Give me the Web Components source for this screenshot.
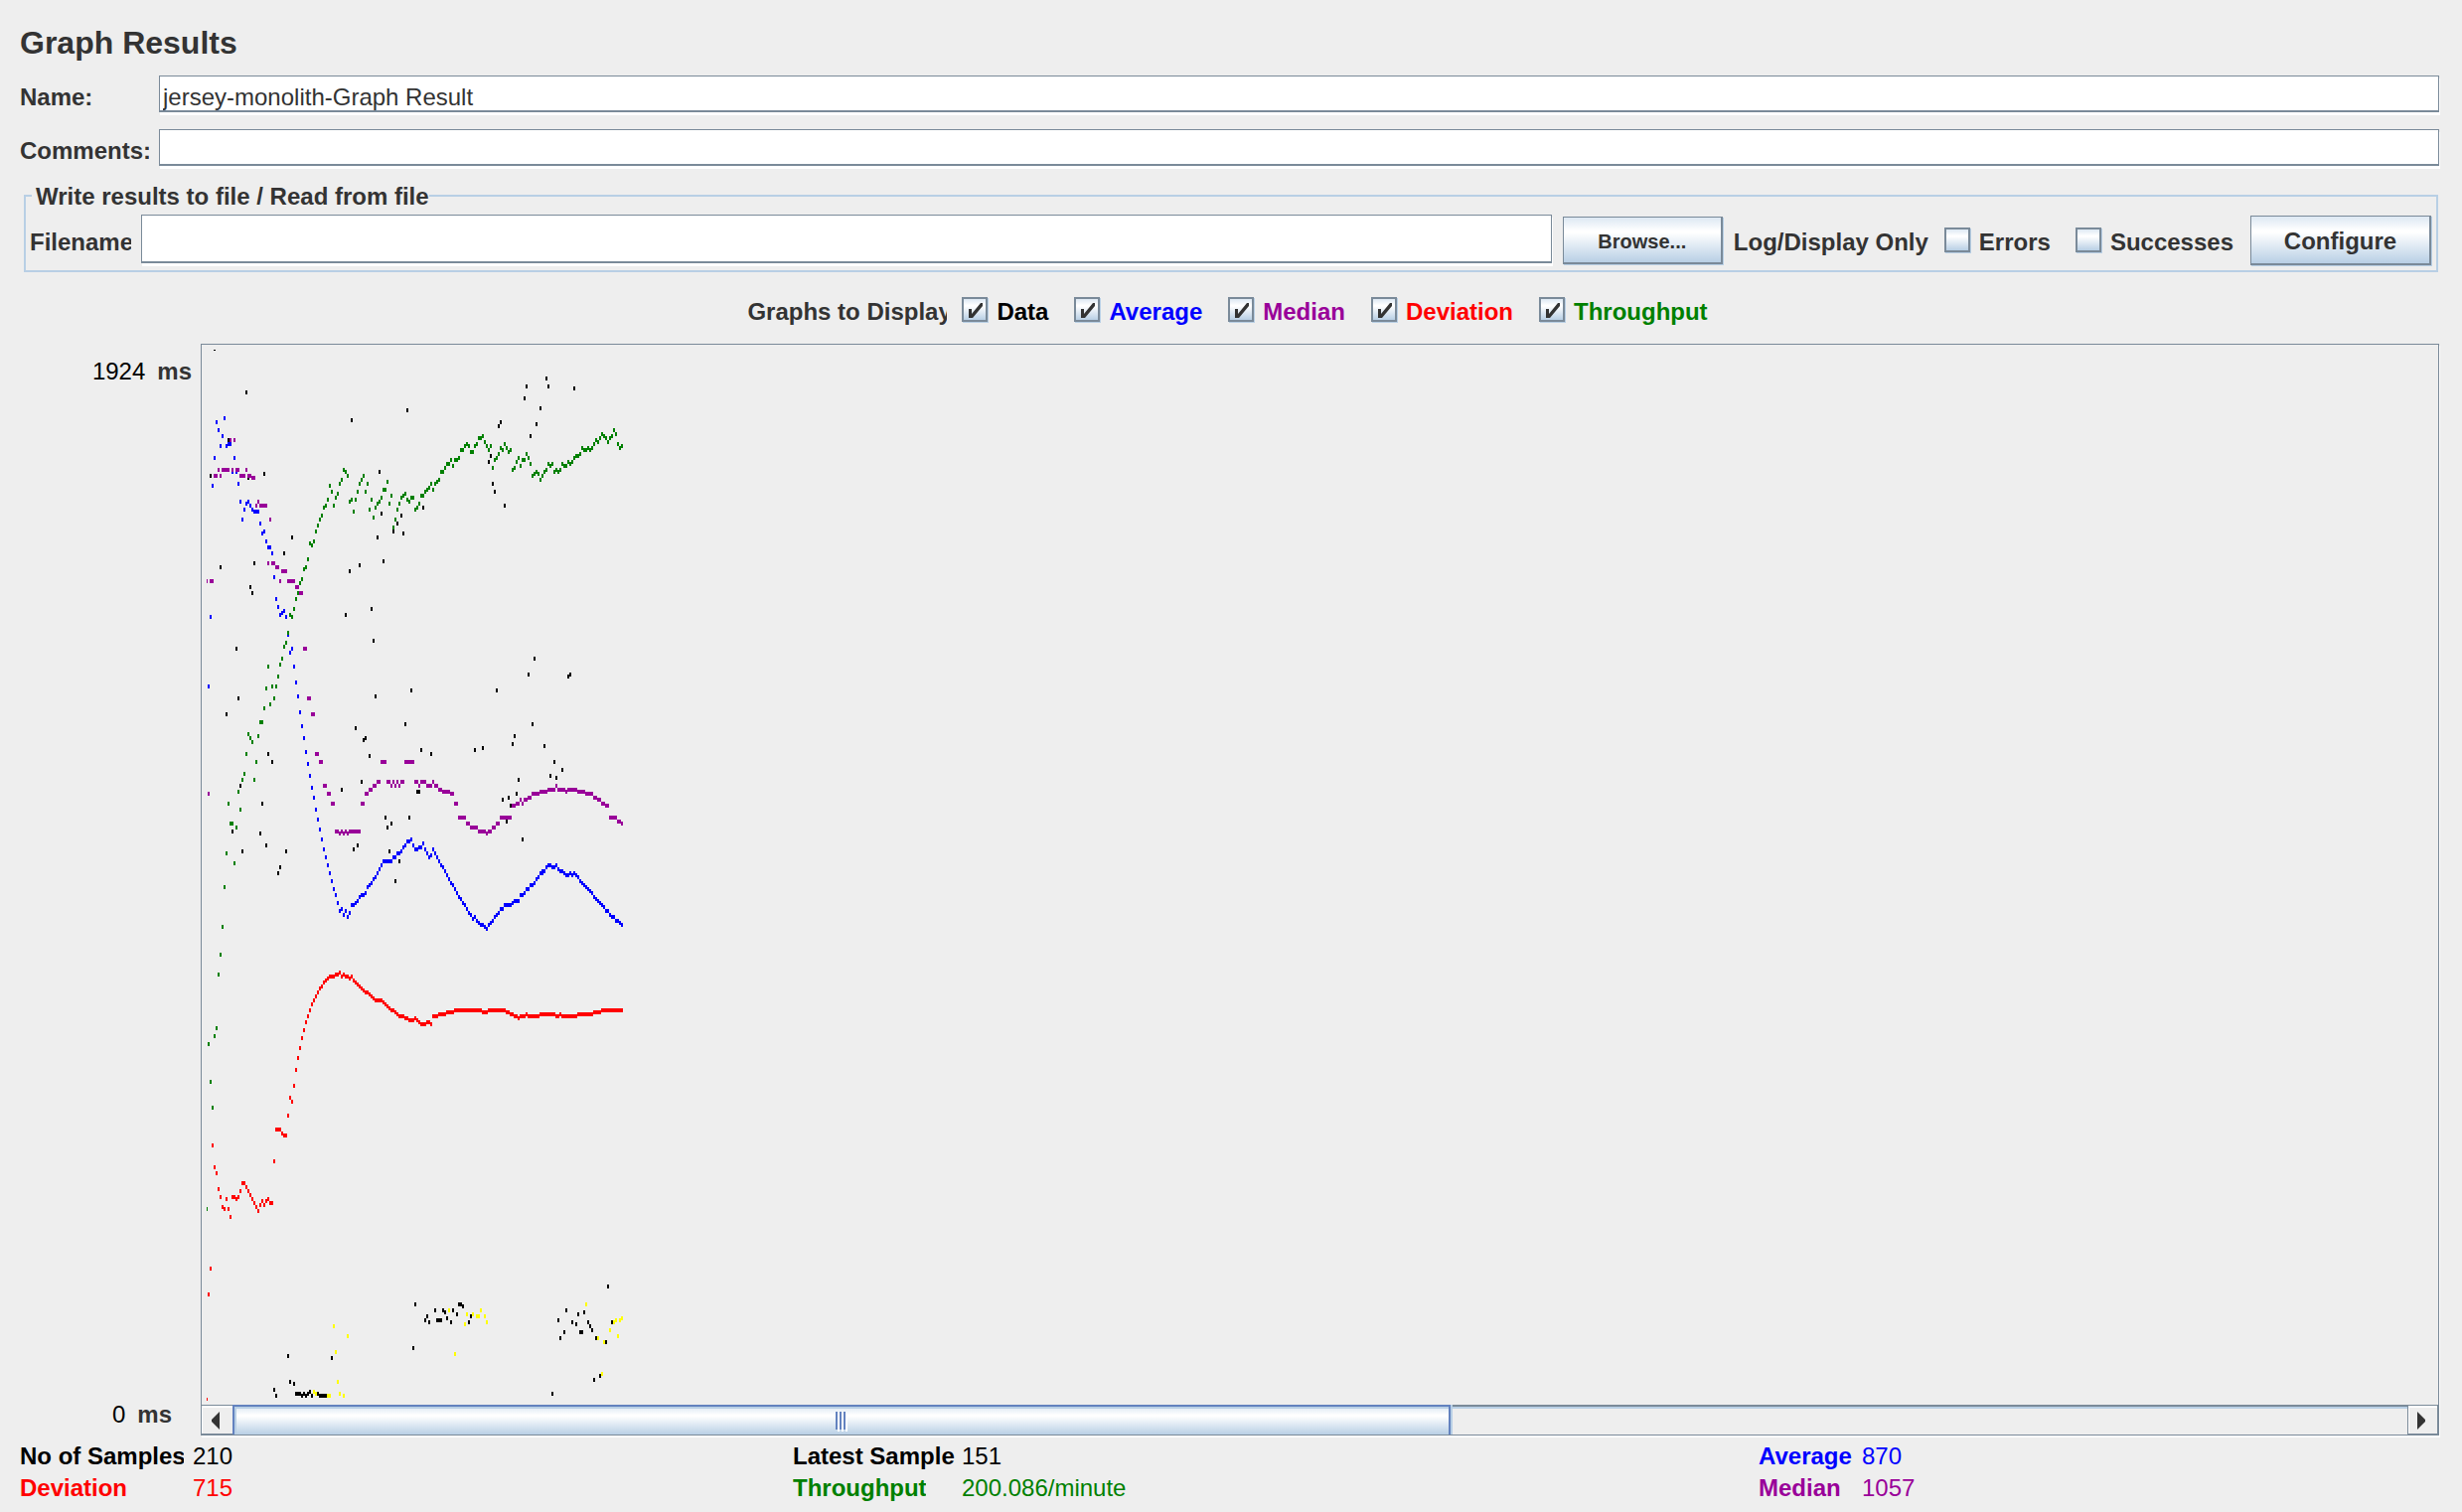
<!DOCTYPE html>
<html lang="en">
<head>
<meta charset="utf-8">
<title>Graph Results</title>
<style>
  html, body { margin: 0; }
  body {
    min-height: 100vh;
    background: #eeeeee;
    color: #333333;
    font: 24px/28px "Liberation Sans", Arial, sans-serif;
    --line: #7a8a99;
    --soft: #b8cfe5;
    --face: linear-gradient(#dde8f3 0%, #ffffff 30%, #ffffff 34%, #b8cfe5 100%);
  }
</style>
</head>
<body>
<graph-results></graph-results>

<script>
/* Label followed by a bordered single-line text box. */
class TextRow extends HTMLElement {
  connectedCallback() {
    const root = this.attachShadow({ mode: 'open' });
    root.innerHTML = `
      <style>
        :host { display: flex; align-items: center; flex: 1; min-width: 0; }
        label { flex: none; width: var(--label-width); padding-top: 4px; margin-right: var(--label-gap); font-weight: bold; white-space: nowrap; overflow: hidden; }
        input { flex: 1; min-width: 0; box-sizing: border-box; height: var(--field-height); margin: 0 1px 3px 0; padding: 8px 2px 0 3px;
          border: 1px solid var(--line); border-bottom-width: 2px; border-radius: 0; outline: none;
          background: #fff; color: inherit; font: inherit; box-shadow: 1px 3px 0 #fff; }
      </style>
      <label for="field"></label><input id="field" type="text">`;
    root.querySelector('label').textContent = this.getAttribute('label');
    root.querySelector('input').value = this.getAttribute('value') || '';
  }
}
customElements.define('text-row', TextRow);

/* Raised button with a gradient face. */
class MetalButton extends HTMLElement {
  connectedCallback() {
    this.attachShadow({ mode: 'open' }).innerHTML = `
      <style>
        :host { display: block; flex: none; }
        button { display: block; box-sizing: border-box; width: 100%; height: 100%; margin: 0; padding: 2px 0 0; border: 2px solid var(--line);
          border-width: 1px 2px 2px 1px; border-radius: 0; background: var(--face); color: inherit; font: inherit; font-weight: bold;
          box-shadow: 1px 1px 0 var(--soft); }
      </style>
      <button type="button"><slot></slot></button>`;
  }
}
customElements.define('metal-button', MetalButton);

/* Tick box with its caption. */
class CheckItem extends HTMLElement {
  connectedCallback() {
    const root = this.attachShadow({ mode: 'open' });
    root.innerHTML = `
      <style>
        :host { display: block; flex: none; }
        label { display: flex; align-items: center; gap: 9px; font-weight: bold; white-space: nowrap; }
        .box { display: grid; flex: none; width: 26px; height: 26px; }
        input, svg { grid-area: 1 / 1; }
        input { appearance: none; box-sizing: border-box; width: 26px; height: 25px; margin: 0; border: 2px solid var(--line);
          background: var(--face); box-shadow: 1px 1px 0 var(--soft); }
        svg { z-index: 1; display: none; pointer-events: none; }
        input:checked + svg { display: block; }
        .text { padding-top: 4px; }
      </style>
      <label for="tick">
        <span class="box"><input id="tick" type="checkbox">
          <svg width="26" height="26" viewBox="0 0 26 26" aria-hidden="true"><path fill="#333" d="M7 12h3v5l9-11h2v3L11 21H7z"/></svg></span>
        <span class="text"><slot></slot></span>
      </label>`;
    root.querySelector('input').checked = this.hasAttribute('checked');
  }
}
customElements.define('check-item', CheckItem);

/* Titled group box with the results file controls. */
class FilePanel extends HTMLElement {
  connectedCallback() {
    this.attachShadow({ mode: 'open' }).innerHTML = `
      <style>
        :host { display: block; }
        fieldset { min-width: 0; margin: 0; padding: 4px 5px 4px 4px; border: 2px solid var(--soft); }
        legend { margin-left: 2px; padding: 2px 0 0 4px; font-weight: bold; }
        .row { display: flex; align-items: center; height: 52px; }
        text-row { --label-width: 102px; --label-gap: 10px; --field-height: 49px; margin-right: 10px; }
        .browse { width: 161px; height: 48px; font-size: 20px; }
        .log { margin: 4px 16px 0 11px; font-weight: bold; white-space: nowrap; }
        .ticks { display: flex; gap: 25px; margin-right: 17px; }
        .configure { width: 182px; height: 50px; }
      </style>
      <fieldset>
        <legend>Write results to file / Read from file</legend>
        <div class="row">
          <text-row label="Filename"></text-row>
          <metal-button class="browse">Browse...</metal-button>
          <span class="log">Log/Display Only</span>
          <div class="ticks"><check-item>Errors</check-item><check-item>Successes</check-item></div>
          <metal-button class="configure">Configure</metal-button>
        </div>
      </fieldset>`;
  }
}
customElements.define('file-panel', FilePanel);

/*
 * Plotted samples. Three units make one pixel; each mark is 6 by 12 units.
 * "x,y" is the centre of a mark, "x1-x2,y" a horizontal run of marks.
 */
const SERIES = [
  { color: '#000000', parts: [
    [0, 0, '174,165 660,219 492,249 120,309 66,417 180,423 228,411 576,405 708,513 582,531 642,537 630,561 618,585 648,591 312,603 570,603 288,651 588,675 198,681 96,693 516,687 486,705 186,753 192,771 552,819 474,837 558,915 144,939'],
    [630, 0, '450,123 390,147 456,147 534,153 384,183 432,213 312,255 306,267 420,261 402,297 282,357 276,375 288,441 294,465 324,507'],
    [0, 960, '672,105 564,123 150,129 114,177 654,207 504,219 534,249 528,255 702,285 240,297 546,303 252,321 522,381 156,393 462,405 690-696,411 222,447 594,489 666,489 612,507 600,519 132,531 216,537 234,573 510,573 498,585 162,591 294,591 606,591 636,621 276,639 270,657 624,681'],
    [630, 960, '414,9 396,57 516,63 522,57 300,105 408,207 354,243 348,267 444,273 234,285 258,279 102,297 474,321 498,345 462,363 480,369 366,375 360,417 336,429 318,435 342,453 330,501 378,555'],
    [0, 2760, '684,159 744,177 768,177 774,183 798,177 816-822,159 828,165 810,189 720,195 714,207 726,213 750-762,207 780,201 792,213 852,195 846,213 678,291 300,315 432,321 306,393 318,399 258,417 264,435 324-336,429 342,435 348,429 354,435 360,429 366,423 372,435 390,429 396-414,435 1266,105 1140,177 1116,207 1176,189 1194,183 1158,213 1170,219 1206,213 1212,225 1218,237 1134,243 1122,261 1182-1188,243 1230,261 1278,213 1260,273 1224,387 1242,375 1098,429']],
    edge: 'M75 36h6v3h-6z' },
  { color: '#ffff00', parts: [
    [0, 2760, '438,225 480,255 444,303 450,393 456,429 468,435 378,423 384,429 420-426,435 786,177 840,189 858,189 870-876,195 882,177 894,195 900,213 834,219 804,309 1200,159 1236,261 1254,273 1272,237 1284,213 1290,207 1302,207 1308,201 1296,255 1248,369']] },
  { color: '#0000ff', parts: [
    [0, 0, '108,243 84,255 90,279 102,297 120-126,321 96,327 114,327 78,363 138,363 132,405 144,405 72,447 150,441 156,495 180,495 174,501 186,507 168,519 192,519 198-210,525 162,549 216,561 228,585 222,591 234,615 240-246,633 252,651 258,723 264,789 270,813 288,825 282,831 276,837 294,843 66,843 300,897 312,939 306,951 318,993'],
    [0, 960, '60,93 324,81 330,123 336,171 342,213 348,249 354,291 360,327 366,363 372,399 378,429 384,465 390,495 396,525 402,555 408,585 414,609 420,633 426,657 432,681 438,705 444,723 450,747 456,771 462,765 468,783 474,771 480,789 486,777 492-498,753 504,747 510,741 516,729 522-528,723 534,717 540,699 546,693 552,687 558,675 564,669 570,657 576,645 582,633 588-612,621 618-624,609 630-636,597 642,591 648,579 654,573 660-666,561 672,555 678,573 684-690,585'],
    [630, 960, '66-72,579 78,567 84,585 90,597 96,609 102,603 108,585 114,597 120,609 126,621 132,633 138,639 144,651 150,663 156,675 162,687 168,693 174,705 180,717 186,729 192,735 198,747 204,753 210,765 216,777 222,783 228,795 234,789 240,801 246,807 252-258,813 264,819 270,825 276,813 282,807 288,801 294,789 300,783 306,777 312-318,765 324-342,753 348,747 354-366,741 372-378,723 384,717 390-396,705 402-408,693 414,687 420,675 426,669 432-438,657 438-444,651 450,639 456-462,633 468-474,639 480,633 486,645 492-498,651 504,657 510-516,663 522,657 528,663 534,657 540,663 546,669 552,681 558,687 564,693 570,699 576,705 582,711 588,717 594,729 600,735 606,741 612,747 618,753 624,759 630-636,771 642,783 648-654,789 660-666,801 672,807 678,813']] },
  { color: '#990099', parts: [
    [0, 0, '126,309 138,309 90,399 102-120,399 132,399 144-150,399 174,399 78-84,417 96,417 156-168,417 180-186,417 192-198,423 210,495 204,507 216-234,507 246,549 240,681 252-258,681 264-270,693 282-294,705 66-72,735 276,735 300-318,735 324-330,753 336-342,771 348-354,939'],
    [0, 960, '60,417 360-366,129 372-378,177 384-390,297 396-402,321 408-414,393 420-426,417 432-438,447 444-450,531 456,537 462,531 468,537 474,531 480,537 486-516,531 522-528,447 534-540,417 546-552,405 558-564,393 570-576,381 582-594,321 600-606,381 612,393 618,381 624,393 630,381 636,393 642-648,381 654-678,321 684-690,381 696,393 702-714,381'],
    [630, 960, '90-102,393 108,381 114-120,393 126-132,405 138-156,411 162-168,417 174-180,447 186-204,489 210-216,507 222-240,519 246-264,531 270,537 276-282,531 288-294,519 300-306,507 312-342,489 348-354,453 360-366,447 372,435 378,447 384-390,435 396-402,429 408-426,417 432-450,411 456-474,405 480,393 486-504,405 510,411 516-540,405 546-564,411 570-588,417 594-600,429 606-612,435 618-624,447 630-636,453 642-660,489 666-672,501 678,507']],
    edge: 'M54 729h3v12h-3z' },
  { color: '#ff0000', parts: [
    [0, 1920, '72,519 78,585 84,603 90,651 96,675 102,705 108,711 114,681 120,711 126,735 132-138,675 144,681 150,675 156,657 162-168,633 174,645 180,657 186,669 192,681 198,693 204,705 210,717 216,699 222,687 228,699 234,687 240,681 246-252,693 258,567 264-276,471 282,483 288-294,489 300,429 306,375 312,387 318,339 324,291 330,255 336,225 342,195 348,171 354,147 360,129 366,111 372,93 378,81 384,69 390,57 396,45 402,39 408,27 414,21 420,15 426-438,9 444-450,3 456,-3 462,9 468,3 474-480,9 486,15 492,9 498,21 504,27 510,33 516,39 522,45 528,51 534-540,57 546,63 552,69 558,75 564-582,81 588,87 594,93 600,99 606,105 612-618,111 624,117 630,123 636-648,129 654-660,135 666-678,141 684,135 690,141 696,147'],
    [630, 1920, '72-84,153 90-96,147 102,153 108-120,129 126-144,123 150-168,117 174-252,111 258-270,117 276-324,111 330-336,117 342-348,123 354-360,129 366,135 372-384,129 390,123 396-426,129 432-474,123 480-486,129 492,123 498-540,129 546-588,123 594-612,117 618-678,111'],
    [0, 2760, '66,51 60,129']],
    edge: 'M54 3201h3v9h-3z' },
  { color: '#008000', parts: [
    [0, 0, '468,399 474,405 480,417 462,429 456,441 426,447 432,465 450,471 444,483 420,489 438,507 414,507 408,513 402,537 396,549 390,567 384,585 378,615 366,621 372,627 360,669 354,693 348,699 342,729 336,741 330,771 324,789 318,819 306,837 312,843 300,891 294,921 288,933 282,969 276,987 240,993 528,417 522,429 516,441 540,441 510,465 534,465 504,489 492,489 486,495 498,525 552,489 546,519 558,543 564,513 570,501 576,495 582,483 588-594,459 600,435 612,477 606,501 618,573 624,549 630,519 636,501 642,483 648,477 654,471 660,489 666,495 672-678,483 684,519 690,513 696,501 702-708,477 714,465'],
    [630, 0, '90,459 96,453 102,441 108,459 114,441 120,435 126,429 132-138,405 144,393 150-156,381 162,369 168,387 174-180,369 186,363 192-198,339 204,327 210,321 216,327 222-228,345 234,327 240,321 246-252,303 258,297 264,315 270,327 276,339 282,327 288,393 294,369 300,363 306,351 312,333 318,339 324,321 330,333 336,345 342,339 348,399 354,393 360,375 366,363 372,387 378-384,369 390,351 396,363 402,381 408,417 414,411 420,405 426,411 432,429 438,417 444,405 450,399 456,381 462,387 468,381 474,405 480,399 486,405 492,399 498,381 504-510,387 516,375 522,381 528,375 534,363 540-546,357 552,351 558,333 564-570,339 576,333 582,339 588,333 594,321 600,309 606,315 612,303 618,291 624,297 630,303 636,315 642,303 648,297 654,279 660,291 666,321 672,333 678,327'],
    [0, 960, '270,63 252,93 264,93 234,99 258,129 246,147 228,159 216-222,201 180,237 210,243 186,249 192,261 174,297 204,321 168,357 162,375 198,375 150,411 120,447 156,465 126-132,507 144,519 114,597 138,627 108,699 102,819 96,903 90,963'],
    [0, 1920, '84,165 78,189 60,213 66,327 72,405']],
    edge: 'M54 2625h3v12h-3z' }
];

class ScatterPlot extends HTMLElement {
  connectedCallback() {
    const mark = (dx, dy) => (token) => {
      const [xs, y] = token.split(',');
      const [x1, x2 = x1] = xs.split('-').map(Number);
      const w = x2 - x1 + 6;
      return `M${x1 + dx - 3} ${+y + dy - 6}h${w}v12h${-w}z`;
    };
    const paths = SERIES.map((s) => {
      const d = s.parts.map(([dx, dy, list]) => list.split(' ').map(mark(dx, dy)).join('')).join('') + (s.edge || '');
      return `<path fill="${s.color}" d="${d}"/>`;
    }).join('');
    this.attachShadow({ mode: 'open' }).innerHTML = `
      <style>
        :host { display: block; }
        svg { display: block; width: 440px; height: 1067px; }
      </style>
      <svg viewBox="39 21 1320 3201" shape-rendering="crispEdges" role="img" aria-label="Graph">${paths}</svg>`;
  }
}
customElements.define('scatter-plot', ScatterPlot);

/* Horizontal scroll bar with arrow buttons and a gripped thumb. */
class ScrollStrip extends HTMLElement {
  connectedCallback() {
    this.attachShadow({ mode: 'open' }).innerHTML = `
      <style>
        :host { display: flex; height: 30px; }
        button { flex: none; width: 31px; margin: 0; padding: 2px 3px 0 0; border: 0 solid var(--line); border-width: 1px 0 1px; border-radius: 0;
          background: #eee; box-shadow: inset 1px 2px 0 #fff; display: grid; place-items: center; }
        .next { border-left-width: 1px; border-right-width: 1px; }
        svg { display: block; }
        .track { flex: 1; box-sizing: border-box; border-top: 2px solid var(--line); box-shadow: inset 0 2px 0 var(--soft); }
        .thumb { box-sizing: border-box; display: flex; justify-content: center; align-items: center; width: 56%; height: 30px; margin-top: -2px; padding: 2px 0 0 1px;
          border: 2px solid #6382bf; border-bottom: 0; background: var(--face); box-shadow: inset 2px 2px 0 var(--soft), 2px 0 0 var(--soft); }
      </style>
      <button type="button" aria-label="Scroll left"><svg width="8" height="18" viewBox="0 0 8 18"><path fill="#333" d="M8 0v18L0 10V8z"/></svg></button>
      <div class="track"><div class="thumb">
        <svg width="12" height="20" viewBox="0 0 12 20" shape-rendering="crispEdges"><path fill="#fff" d="M2 2h2v18H2zM6 2h2v18H6zM10 2h2v18h-2z"/><path fill="#6382bf" d="M0 0h2v18H0zM4 0h2v18H4zM8 0h2v18H8z"/></svg>
      </div></div>
      <button class="next" type="button" aria-label="Scroll right"><svg width="8" height="18" viewBox="0 0 8 18"><path fill="#333" d="M0 0v18L8 10V8z"/></svg></button>`;
  }
}
customElements.define('scroll-strip', ScrollStrip);

/* Caption and value of one statistic. */
class StatItem extends HTMLElement {
  connectedCallback() {
    const root = this.attachShadow({ mode: 'open' });
    root.innerHTML = `
      <style>
        :host { display: flex; line-height: 32px; white-space: nowrap; }
        .cell { flex: none; width: var(--caption-cell); }
        .name { display: block; width: var(--caption-width, auto); overflow: hidden; font-weight: bold; }
      </style>
      <span class="cell"><span class="name"></span></span><span><slot></slot></span>`;
    root.querySelector('.name').textContent = this.getAttribute('name');
  }
}
customElements.define('stat-item', StatItem);

class GraphResults extends HTMLElement {
  connectedCallback() {
    this.attachShadow({ mode: 'open' }).innerHTML = `
      <style>
        :host { display: flex; flex-direction: column; padding: 25px 0 8px; }
        h1 { margin: 0 20px 15px; font-size: 32px; line-height: 36px; }
        .fields { display: flex; flex-direction: column; gap: 14px; margin: 0 22px 12px 20px;
          --label-width: 130px; --label-gap: 10px; --field-height: 37px; }
        file-panel { margin: 0 24px; }
        .shown { display: flex; justify-content: center; align-items: center; gap: 26px; height: 28px; margin: 24px 0 20px; padding-right: 7px; }
        .caption { width: 201px; margin-right: -11px; padding-top: 4px; overflow: hidden; white-space: nowrap; font-weight: bold; }
        .graph { display: flex; margin-right: 23px; }
        .axis { flex: none; box-sizing: border-box; width: 202px; padding: 14px 9px 9px 0; display: flex; flex-direction: column; justify-content: space-between; }
        .mark { display: flex; justify-content: flex-end; gap: 12px; color: #000; }
        .mark b { color: #333; }
        .zero { padding-right: 20px; }
        .frame { flex: 1; min-width: 0; margin-bottom: 2px; border: 1px solid var(--line); box-shadow: 1px 2px 0 #fff; }
        .stats { display: grid; grid-template-columns: 778fr 972fr 708fr; margin: 3px 0 0 20px; }
        .one { --caption-cell: 174px; }
        .two { --caption-cell: 170px; }
        .three { --caption-cell: 104px; }
        .black { color: #000; } .blue { color: #0000ff; } .purple { color: #990099; } .red { color: #ff0000; } .green { color: #008000; }
        .samples { --caption-width: 165px; }
        .through { --caption-width: 134px; }
      </style>
      <h1>Graph Results</h1>
      <div class="fields">
        <text-row label="Name:" value="jersey-monolith-Graph Result"></text-row>
        <text-row label="Comments:"></text-row>
      </div>
      <file-panel></file-panel>
      <div class="shown">
        <span class="caption">Graphs to Display</span>
        <check-item class="black" checked>Data</check-item>
        <check-item class="blue" checked>Average</check-item>
        <check-item class="purple" checked>Median</check-item>
        <check-item class="red" checked>Deviation</check-item>
        <check-item class="green" checked>Throughput</check-item>
      </div>
      <div class="graph">
        <div class="axis">
          <div class="mark"><span>1924</span><b>ms</b></div>
          <div class="mark zero"><span>0</span><b>ms</b></div>
        </div>
        <div class="frame"><scatter-plot></scatter-plot><scroll-strip></scroll-strip></div>
      </div>
      <div class="stats">
        <stat-item class="one black samples" name="No of Samples">210</stat-item>
        <stat-item class="two black" name="Latest Sample">151</stat-item>
        <stat-item class="three blue" name="Average">870</stat-item>
        <stat-item class="one red" name="Deviation">715</stat-item>
        <stat-item class="two green through" name="Throughput">200.086/minute</stat-item>
        <stat-item class="three purple" name="Median">1057</stat-item>
      </div>`;
  }
}
customElements.define('graph-results', GraphResults);
</script>
</body>
</html>
